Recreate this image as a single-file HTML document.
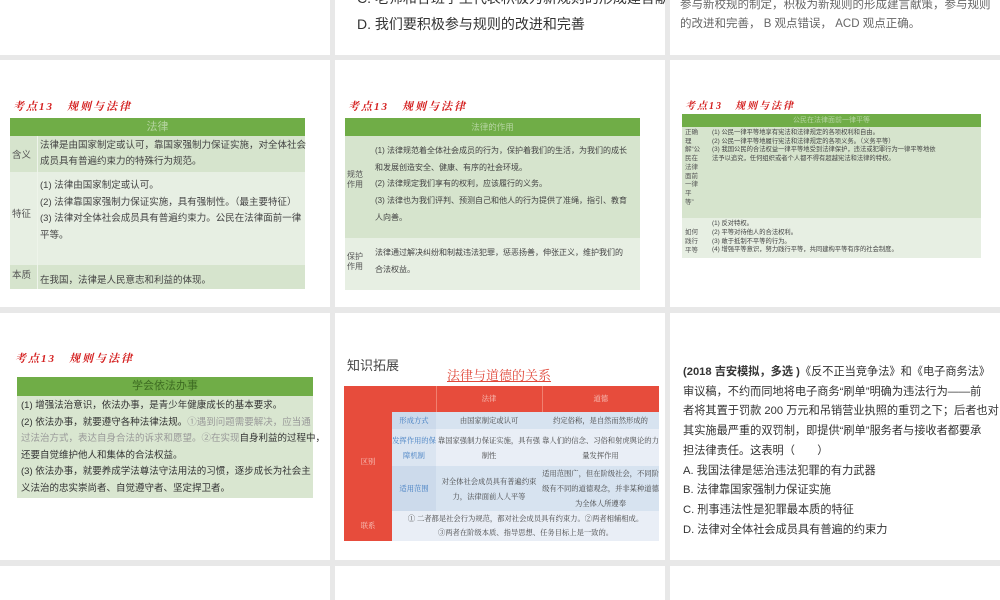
<!DOCTYPE html>
<html><head><meta charset="utf-8"><style>
*{margin:0;padding:0;box-sizing:border-box}
body{width:1000px;height:600px;background:#e8e8e8;position:relative;overflow:hidden;font-family:"Liberation Sans","Noto Sans CJK SC",sans-serif;color:#333}
.s{position:absolute;background:#fff;overflow:hidden}
.a{position:absolute;white-space:nowrap}
.ttl{position:absolute;color:#d42020;font-style:italic;font-weight:bold;font-family:"Liberation Serif","Noto Serif CJK SC",serif;white-space:nowrap;letter-spacing:2px}
.hd{position:absolute;background:#70ad47;color:#b5d4a0;text-align:center}
.r1{position:absolute;background:#d6e4cd}
.r2{position:absolute;background:#e7efe3}
.lb{position:absolute;color:#555}
.tx{position:absolute;color:#444;white-space:nowrap}
table{border-collapse:collapse}
</style></head><body>
<!-- row 1 -->
<div class="s" style="left:0;top:0;width:330px;height:55px"></div>
<div class="s" style="left:335px;top:0;width:330px;height:55px">
 <div class="a" style="left:22px;top:-12px;font-size:14px;color:#333">C. 老师和各班学生代表积极为新规则的形成建言献策</div>
 <div class="a" style="left:22px;top:14px;font-size:14px;color:#333">D. 我们要积极参与规则的改进和完善</div>
</div>
<div class="s" style="left:670px;top:0;width:330px;height:55px">
 <div class="a" style="left:10px;top:-4px;font-size:11.5px;color:#666;line-height:19px">参与新校规的制定，积极为新规则的形成建言献策，参与规则<br>的改进和完善， B 观点错误， ACD 观点正确。</div>
</div>
<!-- row 2 -->
<div class="s" style="left:0;top:60px;width:330px;height:247px">
 <div class="ttl" style="left:13px;top:38px;font-size:11px">考点13　规则与法律</div>
 <div class="hd" style="left:10px;top:58px;width:295px;height:18px;font-size:11px;line-height:18px">法律</div>
 <div class="r1" style="left:10px;top:76px;width:295px;height:36px"></div>
 <div class="r2" style="left:10px;top:112px;width:295px;height:93px"></div>
 <div class="r1" style="left:10px;top:205px;width:295px;height:24px"></div>
 <div style="position:absolute;left:37px;top:76px;width:1px;height:153px;background:#eef4ea"></div>
 <div class="lb" style="left:12px;top:87px;font-size:9.5px">含义</div>
 <div class="tx" style="left:40px;top:78px;font-size:9.5px;line-height:16px">法律是由国家制定或认可，靠国家强制力保证实施，对全体社会<br>成员具有普遍约束力的特殊行为规范。</div>
 <div class="lb" style="left:12px;top:146px;font-size:9.5px">特征</div>
 <div class="tx" style="left:40px;top:118px;font-size:9.5px;line-height:16.5px">(1) 法律由国家制定或认可。<br>(2) 法律靠国家强制力保证实施，具有强制性。（最主要特征）<br>(3) 法律对全体社会成员具有普遍约束力。公民在法律面前一律<br>平等。</div>
 <div class="lb" style="left:12px;top:207px;font-size:9.5px">本质</div>
 <div class="tx" style="left:40px;top:212px;font-size:9.5px">在我国，法律是人民意志和利益的体现。</div>
</div>
<div class="s" style="left:335px;top:60px;width:330px;height:247px">
 <div class="ttl" style="left:13px;top:38px;font-size:11px">考点13　规则与法律</div>
 <div class="hd" style="left:10px;top:58px;width:295px;height:18px;font-size:8.5px;line-height:18px">法律的作用</div>
 <div class="r1" style="left:10px;top:76px;width:295px;height:102px"></div>
 <div class="r2" style="left:10px;top:178px;width:295px;height:52px"></div>
 <div class="lb" style="left:12px;top:110px;font-size:8px;line-height:10px">规范<br>作用</div>
 <div class="tx" style="left:40px;top:83px;font-size:8px;line-height:16.7px">(1) 法律规范着全体社会成员的行为，保护着我们的生活，为我们的成长<br>和发展创造安全、健康、有序的社会环境。<br>(2) 法律规定我们享有的权利，应该履行的义务。<br>(3) 法律也为我们评判、预测自己和他人的行为提供了准绳，指引、教育<br>人向善。</div>
 <div class="lb" style="left:12px;top:192px;font-size:8px;line-height:10px">保护<br>作用</div>
 <div class="tx" style="left:40px;top:184px;font-size:8px;line-height:17px">法律通过解决纠纷和制裁违法犯罪，惩恶扬善，伸张正义，维护我们的<br>合法权益。</div>
</div>
<div class="s" style="left:670px;top:60px;width:330px;height:247px">
 <div class="ttl" style="left:15px;top:37px;font-size:10px">考点13　规则与法律</div>
 <div class="hd" style="left:12px;top:54px;width:299px;height:13px;font-size:7px;line-height:13px">公民在法律面前一律平等</div>
 <div class="r1" style="left:12px;top:67px;width:299px;height:91px"></div>
 <div class="r2" style="left:12px;top:158px;width:299px;height:40px"></div>
 <div class="lb" style="left:15px;top:69px;font-size:6.5px;line-height:8.7px;width:14px">正确理解“公民在法律面前一律平等”</div>
 <div class="tx" style="left:42px;top:69px;font-size:6.3px;line-height:8.7px">(1) 公民一律平等地享有宪法和法律规定的各项权利和自由。<br>(2) 公民一律平等地履行宪法和法律规定的各项义务。（义务平等）<br>(3) 我国公民的合法权益一律平等地受到法律保护，违法或犯罪行为一律平等地依<br>法予以追究，任何组织或者个人都不得有超越宪法和法律的特权。</div>
 <div class="lb" style="left:15px;top:168px;font-size:6.5px;line-height:9px">如何<br>践行<br>平等</div>
 <div class="tx" style="left:42px;top:160px;font-size:6.3px;line-height:8.8px">(1) 反对特权。<br>(2) 平等对待他人的合法权利。<br>(3) 敢于抵制不平等的行为。<br>(4) 增强平等意识，努力践行平等，共同建构平等有序的社会制度。</div>
</div>
<!-- row 3 -->
<div class="s" style="left:0;top:313px;width:330px;height:247px">
 <div class="ttl" style="left:15px;top:37px;font-size:11px">考点13　规则与法律</div>
 <div class="hd" style="left:17px;top:64px;width:296px;height:19px;font-size:11px;line-height:19px;color:#3d6b22">学会依法办事</div>
 <div class="r1" style="left:17px;top:83px;width:296px;height:102px;background:#d9e6d0"></div>
 <div class="tx" style="left:21px;top:85px;font-size:9.5px;line-height:16.5px;color:#333">(1) 增强法治意识，依法办事，是青少年健康成长的基本要求。<br>(2) 依法办事，就要遵守各种法律法规。<span style="color:#999">①遇到问题需要解决，应当通<br>过法治方式，表达自身合法的诉求和愿望。②在实现</span>自身利益的过程中，<br>还要自觉维护他人和集体的合法权益。<br>(3) 依法办事，就要养成学法尊法守法用法的习惯，逐步成长为社会主<br>义法治的忠实崇尚者、自觉遵守者、坚定捍卫者。</div>
</div>
<div class="s" style="left:335px;top:313px;width:330px;height:247px">
 <div class="a" style="left:12px;top:42px;font-size:13px;color:#444">知识拓展</div>
 <div class="a" style="left:112px;top:52px;font-size:13px;color:#e0483a;text-decoration:underline;font-family:'Liberation Serif','Noto Serif CJK SC',serif">法律与道德的关系</div>
 <table style="position:absolute;left:9px;top:73px;width:315px;font-family:'Liberation Serif','Noto Serif CJK SC',serif;font-size:7.3px;text-align:center;color:#444">
  <tr style="height:26px;background:#e74c3c;color:#f8c8c0"><td style="width:48px"></td><td style="width:44px"></td><td style="width:106px;border-left:1px solid #f08070">法律</td><td style="border-left:1px solid #f08070">道德</td></tr>
  <tr style="height:17px;background:#d7e3f0"><td rowspan="3" style="background:#e74c3c;color:#f8c8c0">区别</td><td style="color:#3c7ac0;background:#ccdaeb">形成方式</td><td>由国家制定或认可</td><td>约定俗称，是自然而然形成的</td></tr>
  <tr style="height:37px;background:#e9eef6"><td style="color:#3c7ac0;background:#dbe5f1;line-height:15px">发挥作用的保障机制</td><td style="line-height:15px">靠国家强制力保证实施，具有强制性</td><td style="line-height:15px">靠人们的信念、习俗和射虎舆论的力量发挥作用</td></tr>
  <tr style="height:45px;background:#d7e3f0"><td style="color:#3c7ac0;background:#ccdaeb">适用范围</td><td style="line-height:15px">对全体社会成员具有普遍约束力，法律面前人人平等</td><td style="line-height:15px">适用范围广，但在阶级社会，不同阶级有不同的道德观念，并非某种道德为全体人所遵奉</td></tr>
  <tr style="height:30px;background:#e9eef6"><td style="background:#e74c3c;color:#f8c8c0">联系</td><td colspan="3" style="line-height:14.5px">① 二者都是社会行为规范，都对社会成员具有约束力。②两者相辅相成。<br>③两者在阶级本质、指导思想、任务目标上是一致的。</td></tr>
 </table>
</div>
<div class="s" style="left:670px;top:313px;width:330px;height:247px">
 <div class="tx" style="left:13px;top:50px;font-size:11.2px;line-height:19.7px;color:#333"><b>(2018 吉安模拟，多选 )</b>《反不正当竞争法》和《电子商务法》<br>审议稿，不约而同地将电子商务“刷单”明确为违法行为——前<br>者将其置于罚款 200 万元和吊销营业执照的重罚之下；后者也对<br>其实施最严重的双罚制，即提供“刷单”服务者与接收者都要承<br>担法律责任。这表明（　　）<br>A. 我国法律是惩治违法犯罪的有力武器<br>B. 法律靠国家强制力保证实施<br>C. 刑事违法性是犯罪最本质的特征<br>D. 法律对全体社会成员具有普遍的约束力</div>
</div>
<!-- row 4 -->
<div class="s" style="left:0;top:566px;width:330px;height:34px"></div>
<div class="s" style="left:335px;top:566px;width:330px;height:34px"></div>
<div class="s" style="left:670px;top:566px;width:330px;height:34px"></div>
</body></html>
